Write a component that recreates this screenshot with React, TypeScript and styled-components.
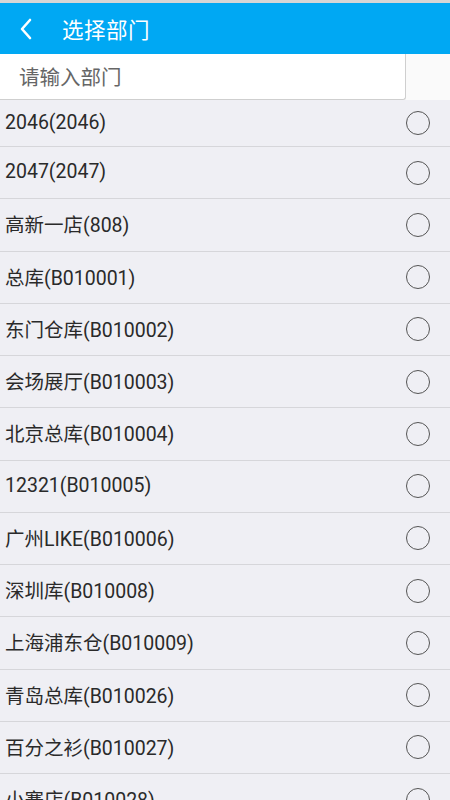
import React from "react";
import styled, { createGlobalStyle } from "styled-components";

const GlobalStyle = createGlobalStyle`
  body {
    margin: 0;
    background: #efeff4;
    font-family: Roboto, "Noto Sans CJK SC", sans-serif;
  }
`;

const Page = styled.div`
  width: 450px;
  min-height: 800px;
  overflow: hidden;
  background: #efeff4;
`;

const TopStrip = styled.div`
  height: 3px;
  background: #d6d6d6;
`;

const Header = styled.header`
  height: 51px;
  background: #00a8f3;
  display: flex;
  align-items: center;
  padding-left: 19px;
  gap: 29px;
  color: #fff;
`;

const Title = styled.h1`
  margin: 0;
  font-size: 21.5px;
  font-weight: 400;
  letter-spacing: 0.5px;
`;

const SearchBar = styled.div`
  height: 46px;
  background: #fafafa;
  display: flex;
`;

const SearchBox = styled.input`
  width: 406px;
  height: 46px;
  box-sizing: border-box;
  border: none;
  border-right: 1px solid #cfcfcf;
  border-bottom: 1px solid #cfcfcf;
  border-bottom-right-radius: 3px;
  background: #fff;
  padding: 3px 0 0 19px;
  font-size: 20.5px;
  font-family: Roboto, "Noto Sans CJK SC", sans-serif;
  color: #333;
  outline: none;
  &::placeholder {
    color: #666;
  }
`;

const List = styled.ul`
  list-style: none;
  margin: 0;
  padding: 0;
`;

const Row = styled.li<{ $first?: boolean }>`
  height: ${(p) => (p.$first ? 46 : 51.25)}px;
  border-bottom: 1px solid #d6d6da;
  display: flex;
  align-items: center;
  justify-content: space-between;
  padding: 0 20px 0 5px;
`;

const Label = styled.span`
  font-size: 19.5px;
  color: #2a2a2a;
  margin-top: -2px;
`;

const Radio = styled.span`
  width: 22px;
  height: 22px;
  border: 1.5px solid #555;
  border-radius: 50%;
  box-sizing: content-box;
`;

const items = [
  "2046(2046)",
  "2047(2047)",
  "高新一店(808)",
  "总库(B010001)",
  "东门仓库(B010002)",
  "会场展厅(B010003)",
  "北京总库(B010004)",
  "12321(B010005)",
  "广州LIKE(B010006)",
  "深圳库(B010008)",
  "上海浦东仓(B010009)",
  "青岛总库(B010026)",
  "百分之衫(B010027)",
  "小寨店(B010028)",
];

export default function App() {
  return (
    <Page>
      <GlobalStyle />
      <TopStrip />
      <Header>
        <svg width="14" height="22" viewBox="0 0 14 22">
          <path d="M11 2 L3 11 L11 20" fill="none" stroke="#fff" strokeWidth="2.6" strokeLinecap="round" strokeLinejoin="round" />
        </svg>
        <Title>选择部门</Title>
      </Header>
      <SearchBar>
        <SearchBox placeholder="请输入部门" />
      </SearchBar>
      <List>
        {items.map((t, i) => (
          <Row key={t} $first={i === 0}>
            <Label>{t}</Label>
            <Radio />
          </Row>
        ))}
      </List>
    </Page>
  );
}
